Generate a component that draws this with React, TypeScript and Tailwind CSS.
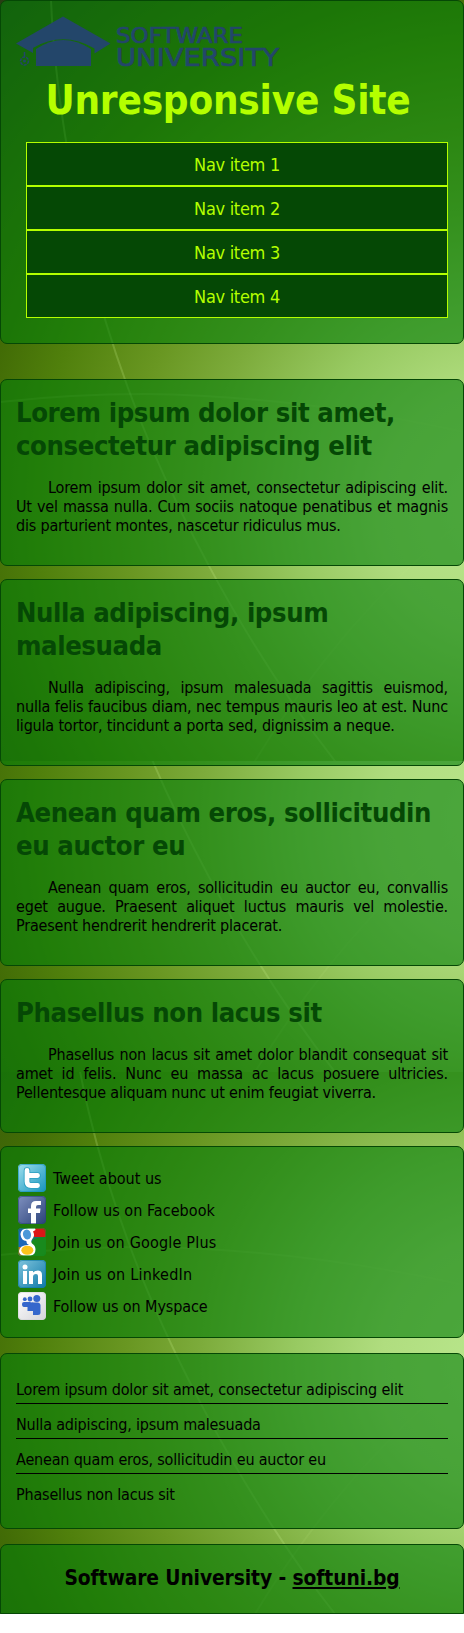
import React from "react";

function Tile({ y }: { y: number }) {
  return (
    <g transform={`translate(0 ${y})`}>
      <rect width="464" height="761" fill="url(#glow)" />
      <g fill="none" stroke="#c8f08c" strokeLinecap="round">
        <path d="M51 0C53 50 58 90 65 135C80 225 92 290 128 388C165 490 240 640 335 761" strokeWidth="2" strokeOpacity=".22" />
        <path d="M0 402Q70 394 145 394Q300 396 464 432" strokeWidth="2" strokeOpacity=".14" />
        <path d="M464 519Q340 620 255 761" strokeWidth="2" strokeOpacity=".1" />
      </g>
    </g>
  );
}

function Backdrop() {
  return (
    <svg className="absolute inset-0 -z-10" width="464" height="1614" viewBox="0 0 464 1614" aria-hidden="true">
      <defs>
        <radialGradient id="glow" gradientUnits="userSpaceOnUse" cx="505" cy="510" r="720">
          <stop offset="0" stopColor="#bae88e" />
          <stop offset=".17" stopColor="#b0dd7f" />
          <stop offset=".29" stopColor="#98ca62" />
          <stop offset=".42" stopColor="#7dac3c" />
          <stop offset=".525" stopColor="#699722" />
          <stop offset=".65" stopColor="#50800c" />
          <stop offset=".735" stopColor="#426c06" />
          <stop offset="1" stopColor="#283c14" />
        </radialGradient>
      </defs>
      <Tile y={853} />
      <svg width="464" height="1072"><Tile y={311} /></svg>
      <svg width="464" height="761"><Tile y={0} /></svg>
    </svg>
  );
}

const panel = "rounded-[7px] border border-[#054805] bg-[#037d08]/60";

function Logo() {
  return (
    <svg className="block overflow-visible" width="264" height="50" viewBox="16 16 264 50">
      <g fill="#23466a">
        <path d="M63 16.500L110.500 43.500L94.500 53.500V48.500Q63 30.500 33 48V53L16 43.500Z" />
        <path d="M36 49Q63 31 91 49V66H36Z" />
      </g>
      <path d="M24.500 52V57" stroke="#23466a" strokeWidth="1.500" />
      <circle cx="24.500" cy="61" r="4" fill="none" stroke="#23466a" strokeWidth="1.500" strokeDasharray="3 1" />
      <circle cx="24.500" cy="61" r="1.500" fill="#23466a" />
      <g fill="#23466a" stroke="#23466a" strokeWidth=".7" fontFamily="DejaVu Sans, sans-serif">
        <text x="116" y="43" fontSize="21" textLength="127" lengthAdjust="spacingAndGlyphs">SOFTWARE</text>
        <text x="116" y="65.500" fontSize="25.500" textLength="163" lengthAdjust="spacingAndGlyphs">UNIVERSITY</text>
      </g>
    </svg>
  );
}

const articles = [
  ["Lorem ipsum dolor sit amet, consectetur adipiscing elit", "Lorem ipsum dolor sit amet, consectetur adipiscing elit. Ut vel massa nulla. Cum sociis natoque penatibus et magnis dis parturient montes, nascetur ridiculus mus."],
  ["Nulla adipiscing, ipsum malesuada", "Nulla adipiscing, ipsum malesuada sagittis euismod, nulla felis faucibus diam, nec tempus mauris leo at est. Nunc ligula tortor, tincidunt a porta sed, dignissim a neque."],
  ["Aenean quam eros, sollicitudin eu auctor eu", "Aenean quam eros, sollicitudin eu auctor eu, convallis eget augue. Praesent aliquet luctus mauris vel molestie. Praesent hendrerit hendrerit placerat."],
  ["Phasellus non lacus sit", "Phasellus non lacus sit amet dolor blandit consequat sit amet id felis. Nunc eu massa ac lacus posuere ultricies. Pellentesque aliquam nunc ut enim feugiat viverra."],
];

function Badge({ id, from, to, children }: { id: string; from: string; to: string; children: React.ReactNode }) {
  return (
    <svg className="block shrink-0" width="28" height="28" viewBox="0 0 28 28">
      <defs>
        <linearGradient id={id} x1="0" y1="0" x2="1" y2="1">
          <stop offset="0" stopColor={from} />
          <stop offset="1" stopColor={to} />
        </linearGradient>
        <clipPath id={id + "-clip"}><rect width="28" height="28" rx="4" /></clipPath>
      </defs>
      <rect width="28" height="28" rx="4" fill={`url(#${id})`} />
      <g clipPath={`url(#${id}-clip)`}>{children}</g>
      <rect x=".5" y=".5" width="27" height="27" rx="3.500" fill="none" stroke={to} strokeOpacity=".6" />
    </svg>
  );
}

const social = [
  { label: "Tweet about us", spacing: "tracking-[0px]", icon: (
    <Badge id="tw" from="#9fe0ee" to="#1593bd">
      <path d="M9 6.500V17.500Q9 21.500 13 21.500H19.500M9 11.500H19.500" fill="none" stroke="#2b9fc0" strokeWidth="6.500" strokeLinecap="round" />
      <path d="M9 6.500V17.500Q9 21.500 13 21.500H19.500M9 11.500H19.500" fill="none" stroke="#fff" strokeWidth="4.800" strokeLinecap="round" />
    </Badge>) },
  { label: "Follow us on Facebook", spacing: "tracking-[0.05px]", icon: (
    <Badge id="fb" from="#7f90bf" to="#2a4279">
      <path d="M13 28V17H10V12.500H13V10Q13 5 18 5H23V9H20Q18 9 18 11V12.500H22.500L22 17H18V28Z" fill="#fff" />
    </Badge>) },
  { label: "Join us on Google Plus", spacing: "tracking-[0.2px]", icon: (
    <Badge id="gp" from="#1b63b8" to="#168a1c">
      <path d="M0 0H14V28H0Z" fill="#1c68b8" />
      <path d="M14 0H28V9H16Z" fill="#dc1717" />
      <path d="M12 17Q13 9 28 9V28H12Z" fill="#188a1d" />
      <path d="M0 19H6V28H0Z" fill="#b9731b" />
      <path d="M17 0Q2 -1 2.500 6.500Q3 12.500 8.500 13Q8 16 11 17Q2 16.500 1 23Q1 28 9 28.500Q17.500 28 17.500 21.500Q17.500 17.500 14 15.500Q12.500 13.500 14 11.500Q17.500 8 15 3.500L17.500 2Z" fill="#fff" />
      <ellipse cx="9" cy="6.500" rx="4" ry="5" fill="#4b98d8" transform="rotate(-15 9 6.500)" />
      <ellipse cx="9.300" cy="22.200" rx="6" ry="4.500" fill="#fdc51b" />
    </Badge>) },
  { label: "Join us on LinkedIn", spacing: "tracking-[0.25px]", icon: (
    <Badge id="li" from="#7fc4dd" to="#0e79a8">
      <circle cx="7" cy="7" r="2.500" fill="#fff" />
      <path d="M5 11H9V24H5ZM11 11H15V12.500Q17 10.500 20 10.500Q24 10.500 24 15V24H20V16Q20 14 18 14Q15 14 15 17V24H11Z" fill="#fff" />
    </Badge>) },
  { label: "Follow us on Myspace", spacing: "tracking-[-0.1px]", icon: (
    <Badge id="ms" from="#ffffff" to="#d4d4d8">
      <g fill="#3567cc">
        <circle cx="6.800" cy="7.200" r="1.900" />
        <circle cx="12" cy="7" r="2.400" />
        <circle cx="18.800" cy="6.500" r="3.500" />
        <path d="M4 12Q4 10 6 10H10Q12 9.500 13 10.500Q14 10 16 10.500H20Q22.500 11 22.500 13V21Q22.500 23 20 23H15V19H9.500V15H6Q4 15 4 12Z" />
      </g>
    </Badge>) },
];

export default function App() {
  return (
    <div className="relative isolate h-[1633px] w-[464px] bg-white font-['DejaVu_Sans_Condensed','DejaVu_Sans',sans-serif] text-[16px] leading-[19px] text-black [font-stretch:condensed]">
      <Backdrop />
      <header className={`${panel} h-[344px] px-[15px] pt-[15px]`}>
        <Logo />
        <h1 className="pt-[10px] pr-[8px] text-center text-[40px] leading-[48px] font-bold tracking-[-0.2px] whitespace-nowrap text-[#b4ff00]">Unresponsive Site</h1>
        <nav className="mt-[18px] ml-[10px] text-[18px] text-[#b4ff00]">
          {[1, 2, 3, 4].map((n) => (
            <a key={n} className="flex h-[44px] items-center justify-center border border-[#b4ff00] bg-[#054805] tracking-[-0.3px]">Nav item {n}</a>
          ))}
        </nav>
      </header>
      <main className="mt-[35px] flex flex-col gap-[13px]">
        {articles.map(([title, body]) => (
          <article key={title} className={`${panel} px-[15px] pt-[16px] pb-[30px]`}>
            <h2 className="text-[27.2px] leading-[33px] font-bold tracking-[-0.4px] text-[#054805]">{title}</h2>
            <p className="mt-[16px] indent-[32px] text-justify tracking-[-0.18px]">{body}</p>
          </article>
        ))}
      </main>
      <aside className={`${panel} mt-[13px] flex h-[192px] flex-col gap-[4px] pt-[17px] pl-[17px]`}>
        {social.map((s) => (
          <a key={s.label} className={`flex items-center gap-[7px] ${s.spacing}`}>{s.icon}{s.label}</a>
        ))}
      </aside>
      <aside className={`${panel} mt-[15px] h-[176px] px-[15px] pt-[15px] tracking-[-0.18px]`}>
        {articles.map(([title]) => (
          <div key={title} className="h-[35px] border-b border-black pt-[11px] whitespace-nowrap last:border-b-0">{title}</div>
        ))}
      </aside>
      <footer className="mt-[15px] h-[70px] rounded-t-[7px] border border-[#054805] bg-[#037d08]/60 pt-[21px] text-center text-[20.8px] leading-[25px] font-bold tracking-[-0.1px]">
        Software University - <a className="underline">softuni.bg</a>
      </footer>
    </div>
  );
}
